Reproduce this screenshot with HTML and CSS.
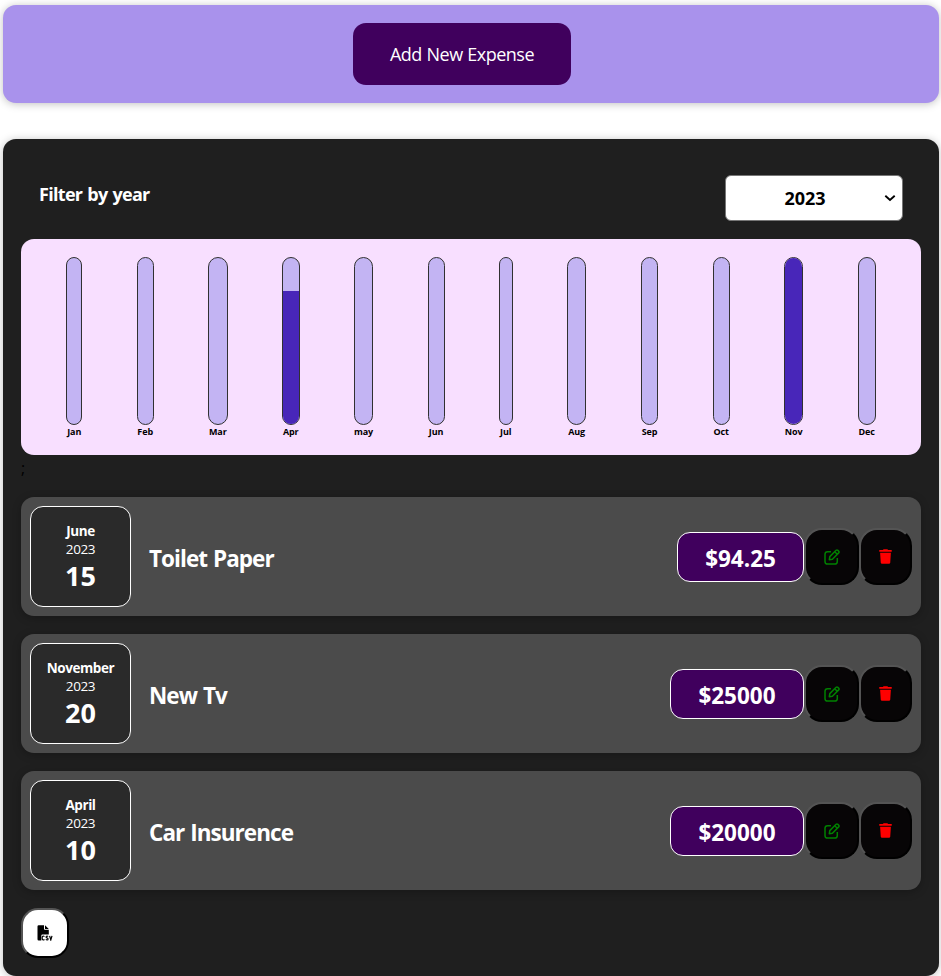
FILE: index.html
```html
<!DOCTYPE html>
<html lang="en">
<head>
<meta charset="utf-8">
<title>Expenses</title>
<link rel="stylesheet" href="styles.css">
</head>
<body>
<svg class="sprite" aria-hidden="true">
  <symbol id="edit" viewBox="0 0 16 16">
    <path d="M7 2.7H3.6Q1 2.7 1 5.3v7.1Q1 15 3.6 15h7.1q2.6 0 2.6-2.6V9" />
    <path d="M5.3 10.7l.5-3.1 6.3-6.3q.9-.7 1.8.1l.7.7q.9.9.1 1.8L8.4 10.2zM10.7 2.7l2.600 2.600" />
  </symbol>
  <symbol id="trash" viewBox="0 0 14 16">
    <path d="M.3 1H4.300L4.900.2h4.200L9.700 1h4v2H.3zM1.200 4h11.600l-.7 10.600q-.1 1.200-1.400 1.200H3.300q-1.300 0-1.400-1.200z" />
  </symbol>
</svg>
<header class="new-expense">
  <button class="add">Add New Expense</button>
</header>
<main class="expenses">
  <div class="filter">
    <label class="filter-label">Filter by year</label>
    <div class="select" role="button"><span class="year-value">2023</span><svg class="chevron" viewBox="0 0 12 8"><path d="M1.300 1.800 6 6l4.700-4.200" /></svg></div>
  </div>
  <div class="chart">
    <div class="bar jan"><div class="track"></div><span>Jan</span></div>
    <div class="bar feb"><div class="track"></div><span>Feb</span></div>
    <div class="bar mar"><div class="track"></div><span>Mar</span></div>
    <div class="bar apr"><div class="track"><div class="fill" style="height:80%"></div></div><span>Apr</span></div>
    <div class="bar may"><div class="track"></div><span>may</span></div>
    <div class="bar jun"><div class="track"></div><span>Jun</span></div>
    <div class="bar jul"><div class="track"></div><span>Jul</span></div>
    <div class="bar aug"><div class="track"></div><span>Aug</span></div>
    <div class="bar sep"><div class="track"></div><span>Sep</span></div>
    <div class="bar oct"><div class="track"></div><span>Oct</span></div>
    <div class="bar nov"><div class="track"><div class="fill" style="height:100%"></div></div><span>Nov</span></div>
    <div class="bar dec"><div class="track"></div><span>Dec</span></div>
  </div>
  <div class="stray">;</div>
  <ul class="list">
    <li class="item">
      <div class="date"><div class="month">June</div><div class="year">2023</div><div class="day">15</div></div>
      <h2 class="title">Toilet Paper</h2>
      <div class="price small">$94.25</div>
      <button class="action edit"><svg><use href="#edit" /></svg></button>
      <button class="action trash"><svg><use href="#trash" /></svg></button>
    </li>
    <li class="item">
      <div class="date"><div class="month">November</div><div class="year">2023</div><div class="day">20</div></div>
      <h2 class="title">New Tv</h2>
      <div class="price">$25000</div>
      <button class="action edit"><svg><use href="#edit" /></svg></button>
      <button class="action trash"><svg><use href="#trash" /></svg></button>
    </li>
    <li class="item">
      <div class="date"><div class="month">April</div><div class="year">2023</div><div class="day">10</div></div>
      <h2 class="title">Car Insurence</h2>
      <div class="price">$20000</div>
      <button class="action edit"><svg><use href="#edit" /></svg></button>
      <button class="action trash"><svg><use href="#trash" /></svg></button>
    </li>
  </ul>
  <button class="csv" aria-label="Export">
    <svg viewBox="0 0 16 16"><path d="M.5 1.500Q.5.300 1.700.300H7v3.800q0 .7.7.7h4.100v4.700H5.500q-1.200 0-1.200 1.200v4.800H1.700q-1.200 0-1.200-1.200zM8 .300l3.800 3.700H8z" /><path class="letters" d="M7.400 11.700Q6.900 11 6.200 11q-1 0-1 1.200v1.600q0 1.200 1 1.200.7 0 1.200-.7M11 11.600q-.4-.6-1-.6-.9 0-.9.9 0 .7.900 1 1.100.3 1.100 1.100 0 1-1 1-.8 0-1.200-.7M12.600 10.900l1.200 4 1.200-4" /></svg>
  </button>
</main>
</body>
</html>
```
FILE: styles.css
```css
* { box-sizing: border-box; }
body {
  margin: 0;
  padding: 5px 2px 0 3px;
  background: #fff;
  font-family: "Open Sans", "Noto Sans", sans-serif;
  overflow: hidden;
}
button { font: inherit; margin: 0; padding: 0; }
.sprite { display: none; }
.new-expense {
  height: 98px;
  padding: 18px 18px 18px 0;
  display: flex;
  justify-content: center;
  background: #a992ec;
  border-radius: 13px;
  box-shadow: 0 1px 8px rgba(0, 0, 0, .25);
}
.add {
  width: 218px;
  height: 62px;
  border: 0;
  border-radius: 13px;
  background: #40005d;
  color: #fff;
  font-size: 18px;
  letter-spacing: -.5px;
  word-spacing: .5px;
}
.expenses {
  height: 837px;
  margin-top: 36px;
  padding: 18px;
  background: #1f1f1f;
  border-radius: 13px;
  box-shadow: 0 1px 8px rgba(0, 0, 0, .25);
}
.filter {
  height: 82px;
  padding: 18px 18px 0;
  display: flex;
  justify-content: space-between;
}
.filter-label {
  color: #fff;
  font-weight: 700;
  font-size: 18px;
  line-height: 38px;
  letter-spacing: -.7px;
  word-spacing: 1px;
}
.select {
  width: 178px;
  height: 46px;
  padding: 0 6px 0 0;
  display: flex;
  align-items: center;
  background: #fff;
  border: 1px solid #767676;
  border-radius: 6px;
  color: #000;
  font-size: 18px;
  font-weight: 700;
}
.year-value { flex: 1; text-align: center; }
.chevron { width: 12px; height: 8px; fill: none; stroke: #000; stroke-width: 1.9; }
.chart {
  height: 216px;
  padding: 18px;
  display: flex;
  justify-content: space-around;
  background: #f8dfff;
  border-radius: 13px;
}
.bar {
  display: flex;
  flex-direction: column;
  align-items: center;
  font-size: 9px;
  font-weight: 700;
  line-height: 12px;
  letter-spacing: -.1px;
  color: #000;
}
.bar span { margin-top: 1px; }
.track {
  flex: none;
  width: 100%;
  height: 168px;
  display: flex;
  flex-direction: column;
  justify-content: flex-end;
  overflow: hidden;
  border: 1px solid #313131;
  border-radius: 12px;
  background: #c3b4f3;
}
.fill { background: #4826b9; }
.jan { width: 16.2px; }
.feb { width: 17.2px; }
.jun { width: 17px; }
.apr { width: 17.6px; }
.oct { width: 16.9px; }
.mar { width: 19.7px; }
.may { width: 19.5px; }
.jul { width: 13.8px; }
.aug, .nov { width: 19.6px; }
.sep { width: 17.8px; }
.dec { width: 18px; }
.stray { height: 42px; font-size: 16px; line-height: 26px; color: #000; }
.list { margin: 0; padding: 0; list-style: none; }
.item {
  height: 119px;
  margin-bottom: 18px;
  padding: 9px;
  display: flex;
  align-items: center;
  background: #4b4b4b;
  border-radius: 13px;
  box-shadow: 0 2px 8px rgba(0, 0, 0, .25);
  color: #fff;
}
.date {
  width: 101px;
  height: 101px;
  padding-top: 15px;
  align-self: flex-start;
  border: 1px solid #fff;
  border-radius: 13px;
  background: #2a2a2a;
  text-align: center;
  font-size: 13.5px;
  line-height: 18px;
}
.month { font-weight: 700; letter-spacing: -.45px; }
.year { letter-spacing: -.4px; }
.day { font-size: 27px; font-weight: 700; line-height: 36px; }
.title {
  flex: 1;
  margin: 0 18px;
  padding-top: 4px;
  font-size: 22.5px;
  line-height: 30px;
  font-weight: 700;
  letter-spacing: -.95px;
  word-spacing: 1px;
}
.price {
  width: 134px;
  height: 50px;
  border: 1px solid #fff;
  border-radius: 13px;
  background: #40005d;
  text-align: center;
  font-size: 22.5px;
  line-height: 51px;
  font-weight: 700;
}
.price.small { width: 127px; }
.action {
  width: 55px;
  height: 57px;
  display: flex;
  align-items: center;
  justify-content: center;
  border: 2px outset #000;
  border-radius: 18px;
  background: #070506;
}
.action.trash { width: 53px; }
.action svg { width: 16px; height: 16px; }
.edit svg { fill: none; stroke: green; stroke-width: 1.5; stroke-linejoin: round; }
.action.trash svg { width: 13px; height: 15px; fill: red; }
.csv {
  width: 48px;
  height: 50px;
  display: flex;
  align-items: center;
  justify-content: center;
  border: 2px outset #000;
  border-radius: 17px;
  background: #fff;
}
.csv svg { width: 16px; height: 16px; }
.letters { fill: none; stroke: #000; stroke-width: 1.2; }
```
